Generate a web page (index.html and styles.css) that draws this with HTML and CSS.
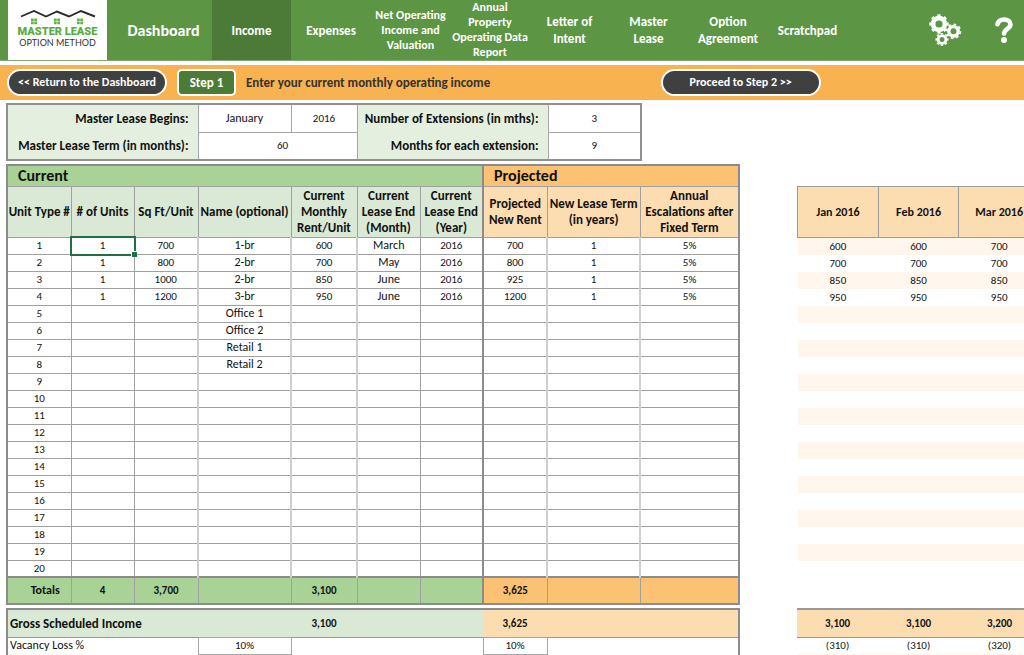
FILE: index.html
```html
<!DOCTYPE html>
<html lang="en">
<head>
<meta charset="utf-8">
<title>Master Lease Option Method - Income</title>
<link rel="stylesheet" href="styles.css">
</head>
<body>
<header class="topbar">
  <a class="logo" href="#" aria-label="Master Lease Option Method">
    <svg class="roofs" viewBox="0 0 76 15" aria-hidden="true">
      <path d="M1 6.500 14 1 26 6.500 37 1.500 49 6.500 61 1 75 6.500" fill="none" stroke="#2b2b2b" stroke-width="1.900"/>
      <g fill="#62b245">
        <path d="M11 8.500h2.700v2.500H11zM14.300 8.500H17v2.500h-2.700zM11 11.600h2.700v2.700H11zM14.300 11.600H17v2.700h-2.700z"/>
        <path d="M34 8.500h2.700v2.500H34zM37.300 8.500H40v2.500h-2.700zM34 11.600h2.700v2.700H34zM37.300 11.600H40v2.700h-2.700z"/>
        <path d="M57 8.500h2.700v2.500H57zM60.300 8.500H63v2.500h-2.700zM57 11.600h2.700v2.700H57zM60.300 11.600H63v2.700h-2.700z"/>
      </g>
    </svg>
    <span class="logo-name">MASTER LEASE</span>
    <span class="logo-sub">OPTION METHOD</span>
  </a>
  <nav class="tabs">
    <a class="tab home" href="#">Dashboard</a>
    <a class="tab active" href="#">Income</a>
    <a class="tab" href="#">Expenses</a>
    <a class="tab dense" href="#">Net Operating<br>Income and<br>Valuation</a>
    <a class="tab dense" href="#">Annual<br>Property<br>Operating Data<br>Report</a>
    <a class="tab" href="#">Letter of<br>Intent</a>
    <a class="tab" href="#">Master<br>Lease</a>
    <a class="tab" href="#">Option<br>Agreement</a>
    <a class="tab" href="#">Scratchpad</a>
  </nav>
  <div class="tools">
    <button type="button" aria-label="Settings">
      <svg width="33" height="33" viewBox="0 0 33 33" fill="none" stroke="#fff">
        <circle cx="10" cy="10" r="5.900" stroke-width="4.600"/>
        <circle cx="10" cy="10" r="8.700" stroke-width="2" pathLength="16" stroke-dasharray="1 1" stroke-dashoffset=".5"/>
        <circle cx="24.500" cy="17.300" r="4.700" stroke-width="3.400"/>
        <circle cx="24.500" cy="17.300" r="7" stroke-width="1.700" pathLength="16" stroke-dasharray="1 1"/>
        <circle cx="13" cy="25.500" r="3.900" stroke-width="2.800"/>
        <circle cx="13" cy="25.500" r="5.800" stroke-width="1.500" pathLength="16" stroke-dasharray="1 1" stroke-dashoffset=".5"/>
      </svg>
    </button>
    <button type="button" aria-label="Help">
      <svg width="18" height="26" viewBox="0 0 18 26" fill="none" stroke="#fff" stroke-width="4.600">
        <path d="M2.500 7.200C3.300 4.200 5.500 2.500 9 2.500c3.900 0 6.500 2 6.500 5 0 4.300-6.400 4.500-6.400 9" stroke-linecap="round"/>
        <circle cx="9" cy="22.900" r="3" fill="#fff" stroke="none"/>
      </svg>
    </button>
  </div>
</header>
<section class="band">
  <div class="band-left">
    <button type="button" class="pill">&lt;&lt; Return to the Dashboard</button>
    <span class="step">Step 1</span>
    <span class="hint">Enter your current monthly operating income</span>
  </div>
  <button type="button" class="pill">Proceed to Step 2 &gt;&gt;</button>
</section>
<main class="sheet">
  <table class="terms">
    <colgroup><col class="w-label"><col class="w-wide"><col class="w-rent"><col class="w-label"><col class="w-wide"></colgroup>
    <tr><th scope="row">Master Lease Begins:</th><td class="word">January</td><td>2016</td><th scope="row">Number of Extensions (in mths):</th><td>3</td></tr>
    <tr><th scope="row">Master Lease Term (in months):</th><td colspan="2" class="term">60</td><th scope="row">Months for each extension:</th><td>9</td></tr>
  </table>

  <table class="units">
    <colgroup><col class="w-unit"><col class="w-year"><col class="w-unit"><col class="w-wide"><col class="w-rent"><col class="w-year"><col class="w-year"><col class="w-unit"><col class="w-wide"><col class="w-last"></colgroup>
    <thead>
      <tr class="titles"><th colspan="7">Current</th><th colspan="3" class="projected">Projected</th></tr>
      <tr class="heads"><th>Unit Type #</th><th># of Units</th><th>Sq Ft/Unit</th><th>Name (optional)</th><th>Current<br>Monthly<br>Rent/Unit</th><th>Current<br>Lease End<br>(Month)</th><th>Current<br>Lease End<br>(Year)</th><th>Projected<br>New Rent</th><th>New Lease Term<br>(in years)</th><th>Annual<br>Escalations after<br>Fixed Term</th></tr>
    </thead>
    <tbody>
      <tr><td>1</td><td class="selected">1</td><td>700</td><td>1-br</td><td>600</td><td>March</td><td>2016</td><td>700</td><td>1</td><td>5%</td></tr>
      <tr><td>2</td><td>1</td><td>800</td><td>2-br</td><td>700</td><td>May</td><td>2016</td><td>800</td><td>1</td><td>5%</td></tr>
      <tr><td>3</td><td>1</td><td>1000</td><td>2-br</td><td>850</td><td>June</td><td>2016</td><td>925</td><td>1</td><td>5%</td></tr>
      <tr><td>4</td><td>1</td><td>1200</td><td>3-br</td><td>950</td><td>June</td><td>2016</td><td>1200</td><td>1</td><td>5%</td></tr>
      <tr><td>5</td><td></td><td></td><td>Office 1</td><td></td><td></td><td></td><td></td><td></td><td></td></tr>
      <tr><td>6</td><td></td><td></td><td>Office 2</td><td></td><td></td><td></td><td></td><td></td><td></td></tr>
      <tr><td>7</td><td></td><td></td><td>Retail 1</td><td></td><td></td><td></td><td></td><td></td><td></td></tr>
      <tr><td>8</td><td></td><td></td><td>Retail 2</td><td></td><td></td><td></td><td></td><td></td><td></td></tr>
      <tr><td>9</td><td></td><td></td><td></td><td></td><td></td><td></td><td></td><td></td><td></td></tr>
      <tr><td>10</td><td></td><td></td><td></td><td></td><td></td><td></td><td></td><td></td><td></td></tr>
      <tr><td>11</td><td></td><td></td><td></td><td></td><td></td><td></td><td></td><td></td><td></td></tr>
      <tr><td>12</td><td></td><td></td><td></td><td></td><td></td><td></td><td></td><td></td><td></td></tr>
      <tr><td>13</td><td></td><td></td><td></td><td></td><td></td><td></td><td></td><td></td><td></td></tr>
      <tr><td>14</td><td></td><td></td><td></td><td></td><td></td><td></td><td></td><td></td><td></td></tr>
      <tr><td>15</td><td></td><td></td><td></td><td></td><td></td><td></td><td></td><td></td><td></td></tr>
      <tr><td>16</td><td></td><td></td><td></td><td></td><td></td><td></td><td></td><td></td><td></td></tr>
      <tr><td>17</td><td></td><td></td><td></td><td></td><td></td><td></td><td></td><td></td><td></td></tr>
      <tr><td>18</td><td></td><td></td><td></td><td></td><td></td><td></td><td></td><td></td><td></td></tr>
      <tr><td>19</td><td></td><td></td><td></td><td></td><td></td><td></td><td></td><td></td><td></td></tr>
      <tr><td>20</td><td></td><td></td><td></td><td></td><td></td><td></td><td></td><td></td><td></td></tr>
    </tbody>
    <tfoot>
      <tr><th scope="row">Totals</th><td>4</td><td>3,700</td><td></td><td>3,100</td><td></td><td></td><td>3,625</td><td></td><td></td></tr>
    </tfoot>
  </table>

  <div class="month-pane">
    <table class="months">
      <thead><tr><th>Jan 2016</th><th>Feb 2016</th><th>Mar 2016</th></tr></thead>
      <tbody>
        <tr><td>600</td><td>600</td><td>700</td></tr>
        <tr><td>700</td><td>700</td><td>700</td></tr>
        <tr><td>850</td><td>850</td><td>850</td></tr>
        <tr><td>950</td><td>950</td><td>950</td></tr>
        <tr><td></td><td></td><td></td></tr>
        <tr><td></td><td></td><td></td></tr>
        <tr><td></td><td></td><td></td></tr>
        <tr><td></td><td></td><td></td></tr>
        <tr><td></td><td></td><td></td></tr>
        <tr><td></td><td></td><td></td></tr>
        <tr><td></td><td></td><td></td></tr>
        <tr><td></td><td></td><td></td></tr>
        <tr><td></td><td></td><td></td></tr>
        <tr><td></td><td></td><td></td></tr>
        <tr><td></td><td></td><td></td></tr>
        <tr><td></td><td></td><td></td></tr>
        <tr><td></td><td></td><td></td></tr>
        <tr><td></td><td></td><td></td></tr>
        <tr><td></td><td></td><td></td></tr>
        <tr><td></td><td></td><td></td></tr>
      </tbody>
    </table>
  </div>

  <table class="income">
    <colgroup><col class="w-label"><col class="w-wide"><col class="w-rent"><col class="w-years"><col class="w-unit"><col class="w-rest"></colgroup>
    <tr class="gross"><th scope="row">Gross Scheduled Income</th><td></td><td>3,100</td><td></td><td class="projected">3,625</td><td class="projected"></td></tr>
    <tr class="vacancy"><th scope="row">Vacancy Loss %</th><td class="entry">10%</td><td></td><td></td><td class="entry">10%</td><td></td></tr>
    <tr class="vacancy"><td></td><td></td><td></td><td></td><td></td><td></td></tr>
  </table>

  <div class="month-pane">
    <table class="month-income">
      <tr class="gross"><td>3,100</td><td>3,100</td><td>3,200</td></tr>
      <tr class="vacancy"><td>(310)</td><td>(310)</td><td>(320)</td></tr>
      <tr class="vacancy striped"><td></td><td></td><td></td></tr>
    </table>
  </div>
</main>
</body>
</html>
```

FILE: styles.css
```css
* { box-sizing: border-box; }

body {
  margin: 0;
  height: 100vh;
  overflow: hidden;
  background: #fff;
  color: #111;
  font: 11px/17px Carlito, Calibri, Lato, sans-serif;
}

button { font: inherit; cursor: pointer; }
a { color: inherit; text-decoration: none; }

/* Top navigation */
.topbar {
  display: grid;
  grid-template-columns: 99px 740fr 177fr;
  height: 61px;
  padding-left: 8px;
  background: #5c9645;
  border-bottom: 1px solid #7fa96e;
}

.logo {
  display: flex;
  flex-direction: column;
  align-items: center;
  padding-top: 10px;
  background: #fff;
}
.roofs { width: 76px; height: 15px; }
.logo-name {
  color: #5aac3c;
  font: 900 11px/13px Roboto, sans-serif;
  white-space: nowrap;
}
.logo-sub { color: #333; font: 9px/9px Lato, sans-serif; white-space: nowrap; }

.tabs {
  display: grid;
  grid-template-columns: 105fr 79fr 80fr 79fr 80fr 79fr 79fr 80fr 79fr;
}
.tab {
  display: flex;
  align-items: center;
  justify-content: center;
  min-width: 0;
  color: #fff;
  font-size: 13px;
  font-weight: bold;
  text-align: center;
  white-space: nowrap;
}
.tab.home { font-size: 16px; padding-left: 8px; }
.tab.active { background: #4b7b37; }
.tab.dense { font-size: 12px; line-height: 15px; }

.tools {
  display: flex;
  align-items: center;
  justify-content: flex-end;
  gap: 33px;
  padding-right: 11px;
}
.tools button { display: flex; padding: 0; border: 0; background: none; }

/* Step band */
.band {
  display: grid;
  grid-template-columns: 653fr 363fr;
  align-items: center;
  justify-items: start;
  height: 35px;
  margin-top: 4px;
  padding-left: 7px;
  background: #f8b250;
  border-bottom: 1px solid #bbb;
}
.band-left { display: flex; align-items: center; gap: 10px; }
.pill, .step {
  height: 27px;
  border: 2px solid #fff;
  color: #fff;
  font-size: 12px;
  font-weight: bold;
  text-align: center;
  white-space: nowrap;
}
.pill { width: 160px; padding: 0; border-radius: 14px; background: #404040; }
.step { width: 59px; border-radius: 5px; background: #4b7b37; font-size: 13px; line-height: 23px; }
.hint { color: #333; font-size: 13px; font-weight: bold; white-space: nowrap; }

/* Worksheet */
.sheet {
  display: grid;
  grid-template-columns: 733fr 228fr;
  column-gap: 57px;
  row-gap: 3px;
  align-items: start;
  padding: 3px 0 0 6px;
}

table { width: 100%; border-collapse: collapse; table-layout: fixed; }
th, td { padding: 0; text-align: center; white-space: nowrap; line-height: 15px; }
.w-label { width: 191px; }
.w-wide { width: 93px; }
.w-rent { width: 66px; }
.w-unit { width: 64px; }
.w-year { width: 63px; }
.w-last { width: 99px; }
.w-years { width: 126px; }
.w-rest { width: 192px; }

.terms { grid-column: 1; width: 86.3%; border: 2px solid #909090; }
.terms tr { height: 28px; }
.terms th { padding-right: 9px; background: #e4efdf; font-size: 13px; text-align: right; }
.terms td { border: 1px solid #a6a6a6; }
.terms .word { font-size: 12px; }
.terms .term { padding-left: 10px; }

.units { grid-column: 1; border: 2px solid #8c8c8c; }
.units th, .units td { border: 1px solid #a0a0a0; }
.units .titles { height: 21px; background: #a9d296; }
.units .titles th { padding-left: 10px; font-size: 16px; text-align: left; }
.units .titles .projected { background: #fac272; border-left: 2px solid #8c8c8c; }
.units .heads { height: 51px; background: #d9e9d5; }
.units .heads th { font-size: 13px; line-height: 16px; }
.units .heads th:nth-child(n+8) { background: #fcddb1; }
.units tbody tr { height: 17px; }
.units tbody td:nth-child(4), .units tbody td:nth-child(6) { font-size: 12px; }
.units tbody td:is(:nth-child(4), :nth-child(5), :nth-child(6), :nth-child(9), :nth-child(10)) { border-left: 2px solid #cfcfcf; }
.units tr:not(.titles) > :nth-child(8) { border-left: 2px solid #8c8c8c; }
.units tfoot tr { height: 27px; background: #a9d296; border-top: 2px solid #8c8c8c; font-weight: bold; }
.units tfoot th { padding-left: 12px; font-size: 12px; }
.units tfoot td:nth-child(n+8) { background: #fac272; }

.selected { position: relative; }
.selected::before {
  content: "";
  position: absolute;
  inset: -2px;
  border: 2px solid #1f7145;
}
.selected::after {
  content: "";
  position: absolute;
  right: -3px;
  bottom: -3px;
  width: 5px;
  height: 5px;
  background: #1f7145;
  border: solid #fff;
  border-width: 1px 0 0 1px;
}

/* Monthly projection */
.month-pane { grid-column: 2; overflow: hidden; }
.month-pane table { width: calc(100% + 16px); }
.months { margin-top: 22px; }
.months th { height: 51px; background: #fcddb1; border: 1px solid #9c9c9c; font-size: 12px; }
.months tbody tr { height: 17px; }
.months tbody tr:nth-child(odd), .striped { background: #fff6ee; }

/* Income summary */
.income { grid-column: 1; border: 2px solid #8c8c8c; }
.gross { height: 28px; background: #d9e9d5; border-bottom: 1px solid #999; font-weight: bold; }
.income th { padding-left: 2px; font-size: 13px; text-align: left; }
.income .projected, .month-income .gross { background: #fcddb1; }
.month-income .gross { border-top: 2px solid #999; }
.vacancy { height: 17px; }
.income .vacancy th { font-size: 12px; font-weight: normal; }
.entry { border: 1px solid #a6a6a6; }
```
